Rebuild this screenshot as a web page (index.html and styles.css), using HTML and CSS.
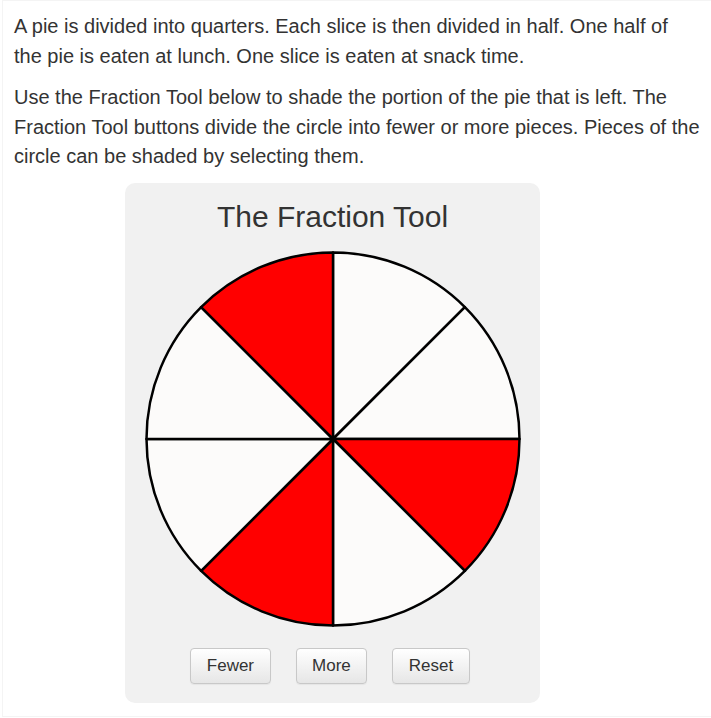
FILE: index.html
```html
<!DOCTYPE html>
<html>
<head>
<meta charset="utf-8">
<link rel="stylesheet" href="styles.css">
</head>
<body>
<div class="page">
  <p class="para">A pie is divided into quarters. Each slice is then divided in half. One half of<br>the pie is eaten at lunch. One slice is eaten at snack time.</p>
  <p class="para">Use the Fraction Tool below to shade the portion of the pie that is left. The<br>Fraction Tool buttons divide the circle into fewer or more pieces. Pieces of the<br>circle can be shaded by selecting them.</p>
  <div class="tool">
    <h2 class="tool-title">The Fraction Tool</h2>
    <svg class="pie" width="380" height="380" viewBox="0 0 380 380">
      <g stroke="#000" stroke-width="2.5" stroke-linejoin="round">
        <path d="M190 190 L190 3.5 A186.5 186.5 0 0 1 321.875 58.125 Z" fill="#fcfbfa"/>
        <path d="M190 190 L321.875 58.125 A186.5 186.5 0 0 1 376.5 190 Z" fill="#fcfbfa"/>
        <path d="M190 190 L376.5 190 A186.5 186.5 0 0 1 321.875 321.875 Z" fill="#ff0000"/>
        <path d="M190 190 L321.875 321.875 A186.5 186.5 0 0 1 190 376.5 Z" fill="#fcfbfa"/>
        <path d="M190 190 L190 376.5 A186.5 186.5 0 0 1 58.125 321.875 Z" fill="#ff0000"/>
        <path d="M190 190 L58.125 321.875 A186.5 186.5 0 0 1 3.5 190 Z" fill="#fcfbfa"/>
        <path d="M190 190 L3.5 190 A186.5 186.5 0 0 1 58.125 58.125 Z" fill="#fcfbfa"/>
        <path d="M190 190 L58.125 58.125 A186.5 186.5 0 0 1 190 3.5 Z" fill="#ff0000"/>
      </g>
    </svg>
    <div class="buttons">
      <button class="btn">Fewer</button>
      <button class="btn">More</button>
      <button class="btn">Reset</button>
    </div>
  </div>
</div>
</body>
</html>
```
FILE: styles.css
```css
html, body {
  margin: 0;
  padding: 0;
  background: #ffffff;
}
.page {
  margin-left: 2px;
  border: 1px solid #f4f4f4;
  border-right: none;
  height: 717px;
  box-sizing: border-box;
  padding: 11px 0 0 11px;
  font-family: "Liberation Sans", Arial, sans-serif;
  color: #333333;
}
.para {
  margin: 0;
  font-size: 20px;
  line-height: 29.5px;
  white-space: nowrap;
}
.para + .para {
  margin-top: 12px;
}
.tool {
  width: 415px;
  margin: 11px 0 0 111px;
  background: #f1f1f1;
  border-radius: 10px;
  padding: 16px 0 19px;
  box-sizing: border-box;
  display: flex;
  flex-direction: column;
  align-items: center;
}
.tool-title {
  margin: 0;
  font-size: 30px;
  line-height: 36px;
  font-weight: normal;
  color: #333333;
}
.pie {
  display: block;
  margin-top: 14px;
}
.buttons {
  display: flex;
  gap: 25px;
  margin-top: 19px;
  margin-right: 5px;
}
.btn {
  font-family: "Liberation Sans", Arial, sans-serif;
  font-size: 17px;
  line-height: 20px;
  padding: 7px 15.5px;
  color: #333333;
  border: 1px solid #c8c8c8;
  border-radius: 4px;
  background: linear-gradient(#ffffff, #e6e6e6);
  box-shadow: 0 1px 1px rgba(0,0,0,0.05);
}
```
